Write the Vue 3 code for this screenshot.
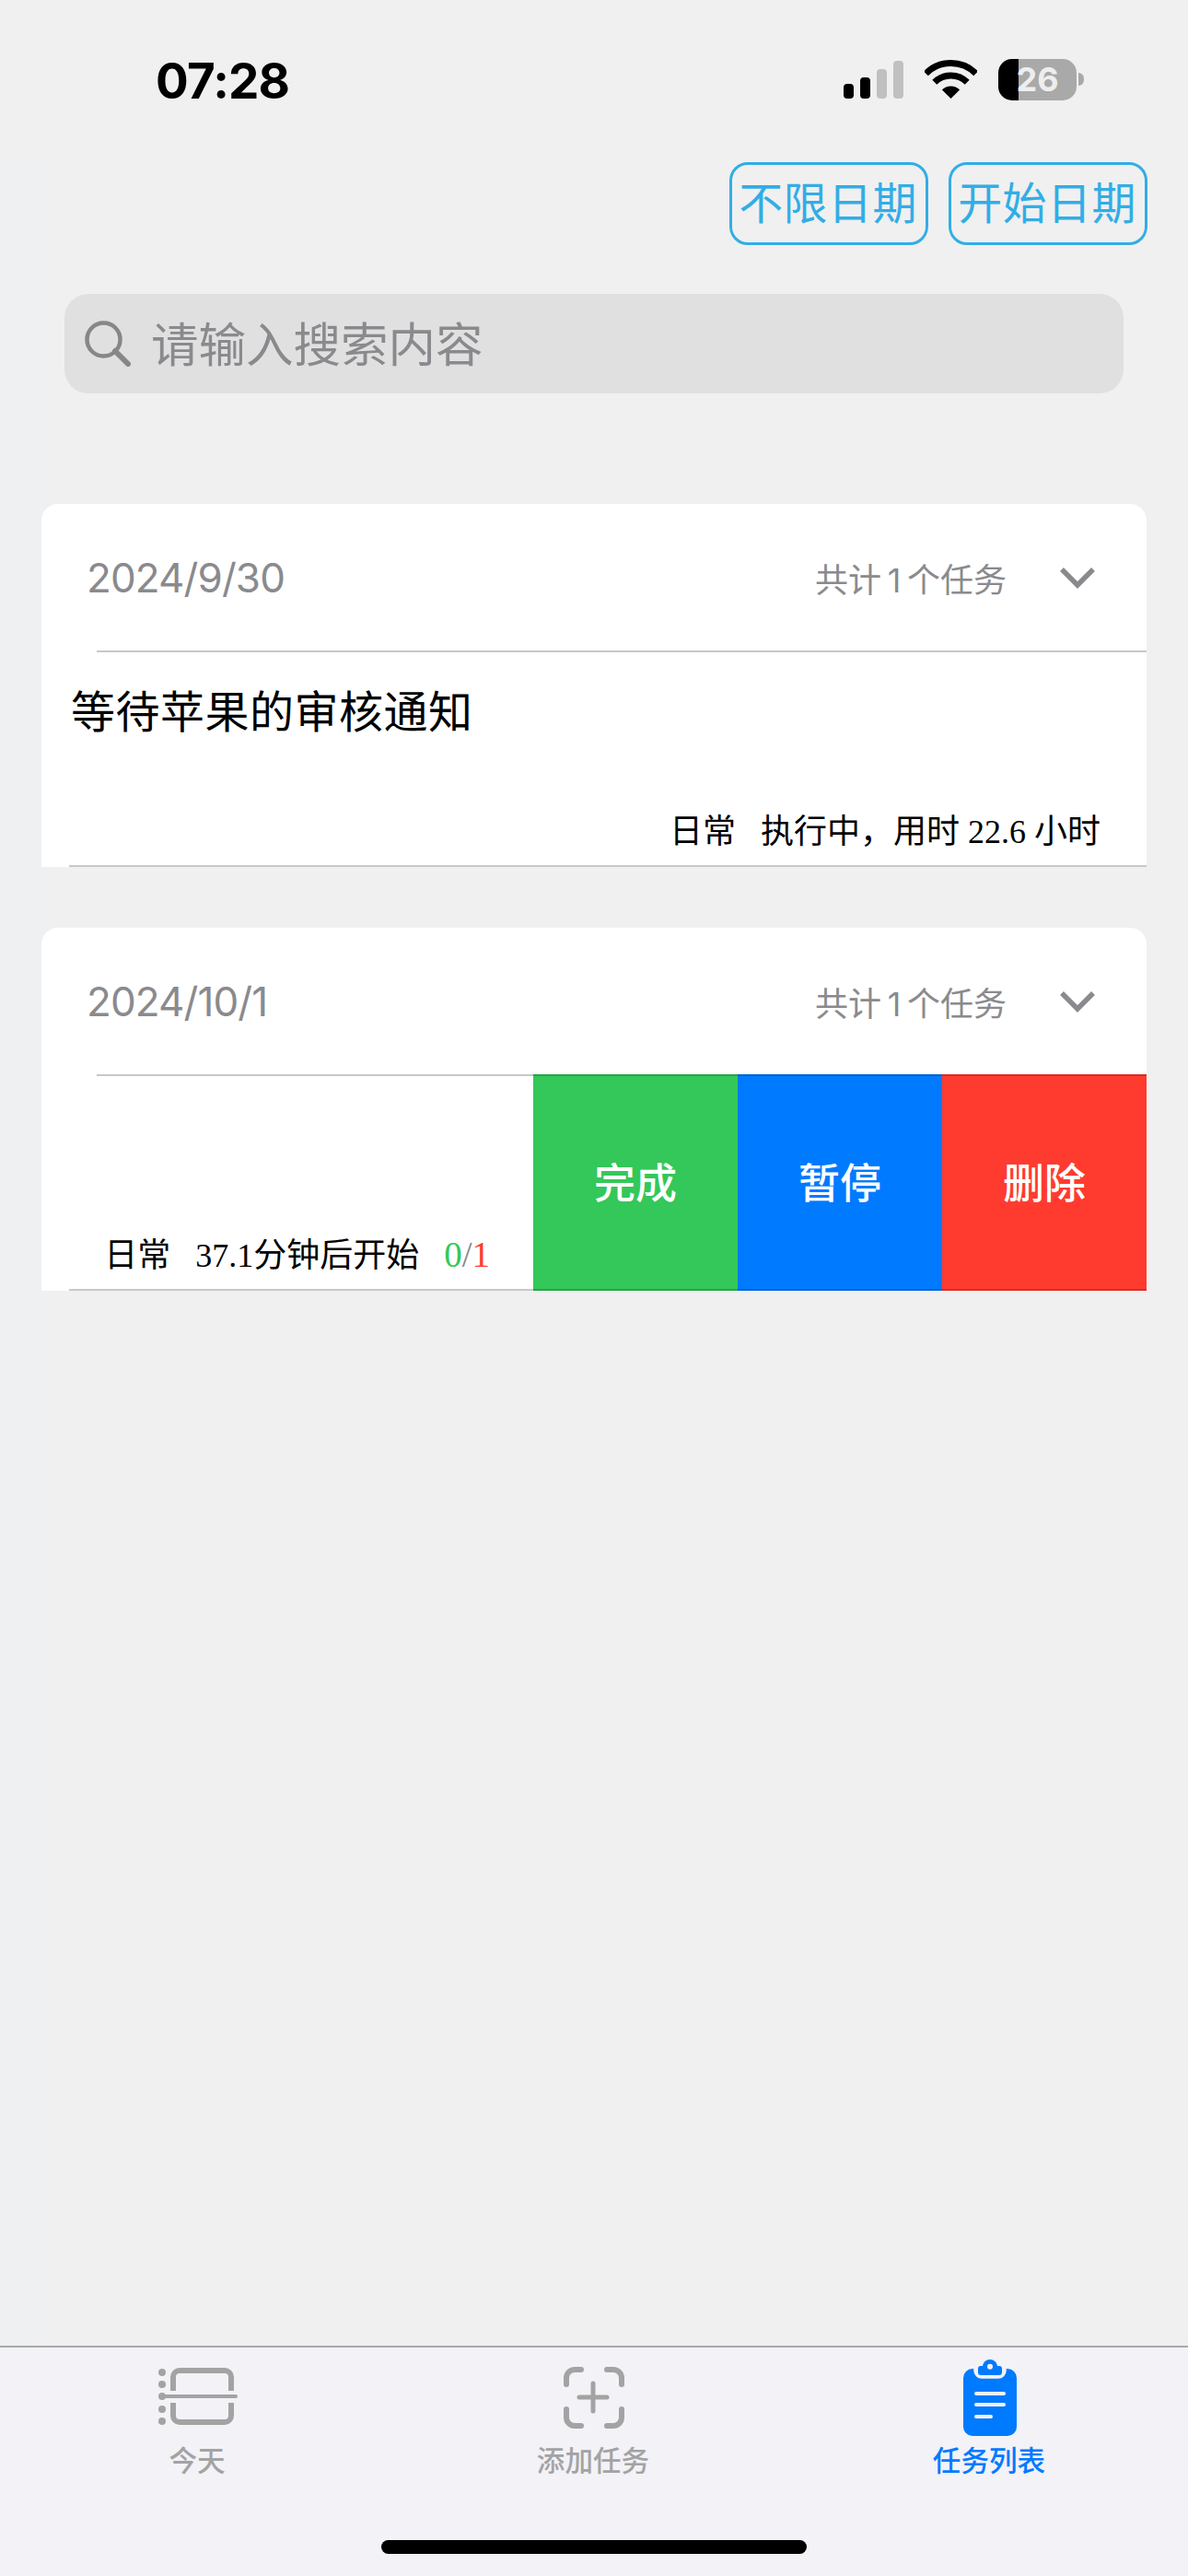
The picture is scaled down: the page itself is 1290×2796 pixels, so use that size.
<template>
  <div class="page">
    <!-- status bar -->
    <div class="status">
      <span class="time">07:28</span>
      <div class="status-icons">
        <svg class="signal" width="74" height="41" viewBox="0 0 74 41">
          <rect x="0" y="25" width="11" height="16" rx="4" fill="#000" />
          <rect x="18" y="18" width="11" height="23" rx="4" fill="#000" />
          <rect x="36" y="9" width="11" height="32" rx="4" fill="#c0c0c0" />
          <rect x="54" y="0" width="11" height="41" rx="4" fill="#c0c0c0" />
        </svg>
        <svg class="wifi" width="57" height="42" viewBox="0 0 57 42">
          <path d="M1.3 14.8A38.5 38.5 0 0 1 55.7 14.8" fill="none" stroke="#000" stroke-width="7" />
          <path d="M10.8 24.3A25 25 0 0 1 46.2 24.3" fill="none" stroke="#000" stroke-width="7" />
          <path d="M28.5 42L18.9 32.4A13.5 13.5 0 0 1 38.1 32.4Z" fill="#000" />
        </svg>
        <div class="battery"><span>26</span></div>
      </div>
    </div>

    <!-- date filters -->
    <div class="filters">
      <button class="filter">不限日期</button>
      <button class="filter">开始日期</button>
    </div>

    <!-- search -->
    <div class="search">
      <svg width="50" height="50" viewBox="0 0 50 50">
        <circle cx="20.5" cy="20.5" r="18" fill="none" stroke="#87878a" stroke-width="4.5" />
        <path d="M33 33L47 47" fill="none" stroke="#87878a" stroke-width="6" stroke-linecap="round" />
      </svg>
      <span>请输入搜索内容</span>
    </div>

    <!-- task groups -->
    <div class="groups">
      <section v-for="group in groups" :key="group.date" class="card">
        <header class="card-head">
          <span class="date">{{ group.date }}</span>
          <span class="count">共计 1 个任务</span>
          <svg class="chevron" width="40" height="24" viewBox="0 0 40 24">
            <path d="M3 3L20 20L37 3" fill="none" stroke="#8a8a8e" stroke-width="5.5" />
          </svg>
        </header>

        <div v-if="!group.swiped" class="row">
          <div class="row-main">
            <div class="rule rule-top"></div>
            <div class="title">等待苹果的审核通知</div>
            <div class="meta">
              <span class="tag">日常</span>
              <span>执行中，用时 22.6 小时</span>
            </div>
            <div class="rule rule-bottom"></div>
          </div>
        </div>

        <div v-else class="row">
          <div class="row-main">
            <div class="rule rule-top"></div>
            <div class="title"></div>
            <div class="meta meta-swiped">
              <span class="tag">日常</span>
              <span>37.1分钟后开始</span>
              <span class="progress"><i class="done">0</i><i class="slash">/</i><i class="total">1</i></span>
            </div>
            <div class="rule rule-bottom"></div>
          </div>
          <div v-for="a in actions" :key="a.label" class="action" :class="a.cls">{{ a.label }}</div>
        </div>
      </section>
    </div>

    <!-- tab bar -->
    <nav class="tabbar">
      <div class="tab">
        <div class="tab-icon">
          <svg width="90" height="66" viewBox="0 0 90 66">
            <g fill="#a3a3a3">
              <circle cx="6" cy="6" r="4" />
              <circle cx="6" cy="19" r="4" />
              <circle cx="6" cy="32" r="4" />
              <circle cx="6" cy="46" r="4" />
              <circle cx="6" cy="59" r="4" />
            </g>
            <g fill="none" stroke="#a3a3a3">
              <path d="M6 32H86" stroke-width="4" stroke-linecap="round" />
              <path d="M18 26V11a7 7 0 0 1 7-7H74a7 7 0 0 1 7 7V26" stroke-width="6" />
              <path d="M18 39V53a7 7 0 0 0 7 7H74a7 7 0 0 0 7-7V39" stroke-width="6" />
            </g>
          </svg>
        </div>
        <span>今天</span>
      </div>
      <div class="tab">
        <div class="tab-icon">
          <svg width="66" height="67" viewBox="0 0 66 67">
            <g fill="none" stroke="#a3a3a3" stroke-width="6" stroke-linecap="round">
              <path d="M3 19V12a9 9 0 0 1 9-9H19" />
              <path d="M47 3H54a9 9 0 0 1 9 9V19" />
              <path d="M3 46V55a9 9 0 0 0 9 9H19" />
              <path d="M47 64H54a9 9 0 0 0 9-9V46" />
              <path d="M32 18V48M17 33H47" stroke-width="5" />
            </g>
          </svg>
        </div>
        <span>添加任务</span>
      </div>
      <div class="tab tab-active">
        <div class="tab-icon">
          <svg width="58" height="83" viewBox="0 0 58 83">
            <rect x="0" y="10" width="58" height="73" rx="10" fill="#007aff" />
            <path d="M13 8V12a7 7 0 0 0 7 7H38a7 7 0 0 0 7-7V8" fill="#f2f2f7" stroke="#f2f2f7" stroke-width="3.5" />
            <circle cx="29" cy="8" r="8" fill="#007aff" />
            <rect x="16" y="7" width="26" height="10" rx="3" fill="#007aff" />
            <circle cx="29" cy="7.7" r="3" fill="#f2f2f7" />
            <g fill="none" stroke="#f2f2f7" stroke-width="4" stroke-linecap="round">
              <path d="M14 37H44" />
              <path d="M14 49H44" />
              <path d="M14 62H30" />
            </g>
          </svg>
        </div>
        <span>任务列表</span>
      </div>
      <div class="home-bar"></div>
    </nav>
  </div>
</template>

<script setup>
const groups = [
  { date: '2024/9/30', swiped: false },
  { date: '2024/10/1', swiped: true },
]

const actions = [
  { label: '完成', cls: 'green' },
  { label: '暂停', cls: 'blue' },
  { label: '删除', cls: 'red' },
]
</script>

<style>
body {
  margin: 0;
}
</style>

<style scoped>
.page {
  width: 1290px;
  height: 2796px;
  display: flex;
  flex-direction: column;
  overflow: hidden;
  background: linear-gradient(#eff0f2, #eff0f2) 0 176px / 45px 100% no-repeat, #f0f0f0;
  font-family: Inter, "Noto Sans CJK SC", sans-serif;
}

.status {
  height: 176px;
  flex: none;
  display: flex;
  justify-content: space-between;
  padding: 62px 121px 0 169px;
  box-sizing: border-box;
}

.time {
  font-size: 53px;
  font-weight: 700;
  line-height: 52px;
  height: 52px;
  color: #000;
  letter-spacing: -0.8px;
}

.status-icons {
  display: flex;
  align-items: flex-start;
  height: 46px;
  margin-top: 2px;
}

.signal {
  margin: 2px 14px 0 0;
  display: block;
}

.wifi {
  margin: 1px 23px 0 0;
  display: block;
}

.battery {
  position: relative;
  width: 85px;
  height: 45px;
  border-radius: 15px;
  background: linear-gradient(90deg, #000 22px, #a9a9a9 22px);
  display: flex;
  align-items: center;
  justify-content: center;
  color: #eee;
  font-size: 36px;
  font-weight: 700;
  line-height: 45px;
}

.battery::after {
  content: "";
  position: absolute;
  left: 87px;
  top: 15px;
  width: 6px;
  height: 14px;
  border-radius: 0 7px 7px 0;
  background: #a9a9a9;
}

.filters {
  flex: none;
  display: flex;
  justify-content: flex-end;
  gap: 22px;
  padding-right: 44px;
}

.filter {
  width: 216px;
  height: 90px;
  box-sizing: border-box;
  padding: 0 2px 0 0;
  border: 3px solid #32ade6;
  border-radius: 20px;
  background: transparent;
  color: #32ade6;
  font-family: inherit;
  font-size: 48px;
  letter-spacing: 0.4px;
  line-height: 84px;
}

.search {
  flex: none;
  width: 1150px;
  height: 108px;
  box-sizing: border-box;
  margin: 53px 0 0 70px;
  padding: 0 0 0 22px;
  display: flex;
  align-items: center;
  gap: 22px;
  background: #e0e0e0;
  border-radius: 26px;
  color: #8a8a8e;
  font-size: 51.5px;
  line-height: 60px;
}

.search span {
  padding-top: 2px;
}

.groups {
  flex: none;
  display: flex;
  flex-direction: column;
  gap: 66px;
  margin: 120px 45px 0;
}

.card {
  background: #fff;
  border-radius: 18px 18px 0 0;
  overflow: hidden;
}

.card-head {
  height: 159px;
  box-sizing: border-box;
  display: flex;
  align-items: center;
  padding: 0 55px 0 49px;
}

.date {
  font-size: 44px;
  letter-spacing: -0.9px;
  color: #8a8a8e;
  flex: 1;
}

.count {
  font-size: 36px;
  color: #8a8a8e;
  word-spacing: -3.5px;
  margin-right: 57px;
}

.chevron {
  display: block;
}

.row {
  height: 235px;
  display: flex;
}

.row-main {
  flex: 1;
  min-width: 0;
  display: flex;
  flex-direction: column;
}

.rule {
  flex: none;
  height: 2px;
  background: #c8c8c8;
}

.rule-top {
  margin-left: 60px;
}

.rule-bottom {
  margin-left: 30px;
}

.title {
  flex: 1;
  padding: 37px 0 0 32px;
  font-size: 48px;
  letter-spacing: 0.5px;
  line-height: 56px;
  color: #000;
}

.meta {
  display: flex;
  justify-content: flex-end;
  align-items: baseline;
  gap: 27px;
  padding: 0 50px 15px 0;
  font-family: "Liberation Serif", "Noto Sans CJK SC", serif;
  font-size: 36px;
  line-height: 42px;
  color: #000;
}

.meta-swiped {
  padding-right: 47px;
}

.progress {
  font-size: 39px;
}

.progress i {
  font-style: normal;
}

.done {
  color: #34c759;
}

.slash {
  color: #8a8a8e;
}

.total {
  color: #ff3b30;
}

.action {
  flex: none;
  width: 222px;
  box-sizing: border-box;
  display: flex;
  align-items: center;
  justify-content: center;
  padding-bottom: 5px;
  color: #fff;
  font-size: 45px;
  font-weight: 500;
  border-top: 2px solid rgba(0, 0, 0, 0.18);
  border-bottom: 2px solid rgba(0, 0, 0, 0.18);
}

.green {
  background-color: #34c759;
}

.blue {
  background-color: #007aff;
}

.red {
  background-color: #ff3b30;
}

.tabbar {
  position: relative;
  margin-top: auto;
  flex: none;
  height: 250px;
  box-sizing: border-box;
  border-top: 2px solid #a9a9a9;
  padding-top: 12px;
  display: grid;
  grid-template-columns: repeat(3, 430px);
  align-content: start;
  background: #f2f2f7;
}

.tab {
  display: flex;
  flex-direction: column;
  align-items: center;
  color: #a3a3a3;
  font-size: 30.6px;
  font-weight: 500;
  line-height: 36px;
}

.tab span {
  margin-left: -2px;
}

.tab-active {
  color: #007aff;
}

.tab-icon {
  height: 84px;
  margin-bottom: 9px;
  display: flex;
  align-items: center;
  justify-content: center;
}

.tab-icon svg {
  display: block;
}

.home-bar {
  position: absolute;
  left: 414px;
  top: 209px;
  width: 462px;
  height: 15px;
  border-radius: 8px;
  background: #000;
}
</style>
